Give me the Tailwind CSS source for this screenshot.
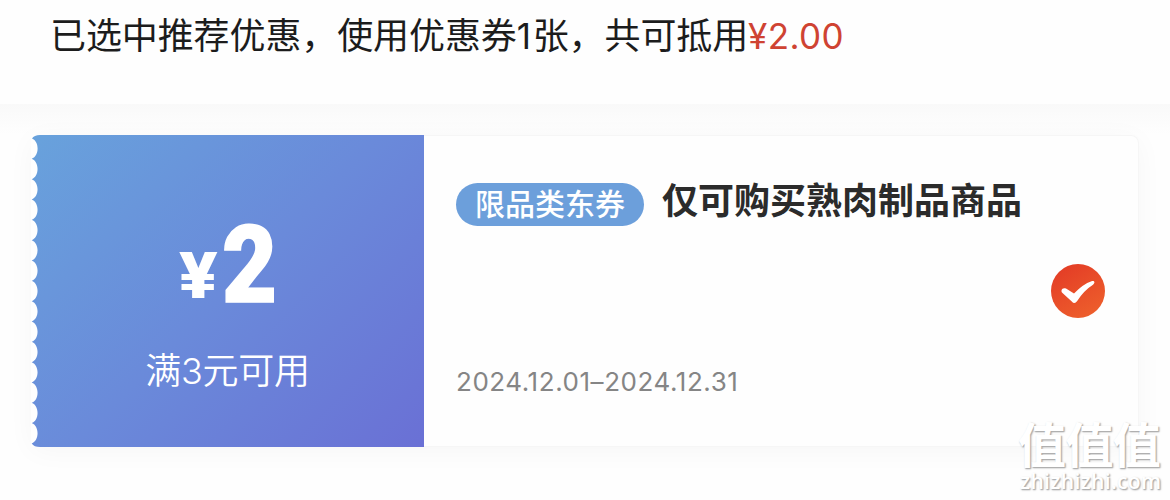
<!DOCTYPE html>
<html lang="zh-CN">
<head>
  <meta charset="UTF-8" />
  <meta name="viewport" content="width=device-width, initial-scale=1.0"/>
  <title>优惠券</title>
  <script src="https://cdn.jsdelivr.net/npm/@tailwindcss/browser@4"></script>
</head>
<body class="relative h-[500px] overflow-hidden bg-[#fefefe] font-[Inter,'Noto_Sans_CJK_SC',sans-serif]">

  <!-- Summary -->
  <header class="flex h-[104px] items-start bg-[#fefefe] pl-[50px] pt-[7px] text-[36px] leading-[52px] whitespace-nowrap text-[#1c1c1c]">
    <p class="tracking-[-0.1px] font-['Noto_Sans_CJK_SC',sans-serif]">已选中推荐优惠，使用优惠券<span class="inline-block w-[16px] font-[Inter] text-[35px] tracking-normal">1</span>张，共可抵用<span class="font-[Inter] text-[35px] tracking-[0.4px] text-[#cf4332]">¥2.00</span></p>
  </header>

  <main class="h-[396px] bg-linear-to-b from-[#f9f9f9] to-[#fefefe] to-[30px] pl-[31px] pt-[31px]">
    <!-- Coupon -->
    <section class="flex h-[312px] w-[1108px] rounded-lg bg-[#fefefe] shadow-[0_4px_28px_rgba(0,0,0,0.035)]">

      <div class="relative w-[393px] bg-[#fefefe]">
        <svg class="absolute inset-0" width="393" height="312" viewBox="0 0 393 312">
          <defs>
            <linearGradient id="blue" gradientUnits="userSpaceOnUse" x1="20" y1="-20" x2="373" y2="332">
              <stop offset="0" stop-color="#68a2dc"/>
              <stop offset="0.5" stop-color="#6a8ada"/>
              <stop offset="1" stop-color="#6a70d5"/>
            </linearGradient>
          </defs>
          <path id="ticket" fill="url(#blue)" d=""/>
        </svg>
        <div class="relative flex h-full flex-col items-center text-white">
          <div class="mt-[70px] flex h-[120px] items-baseline font-[Roboto] font-black leading-[120px]">
            <span class="relative -top-1 inline-block w-[43px] text-[65px]"><span class="inline-block origin-left scale-x-110">¥</span></span>
            <span class="inline-block w-[54px] text-[108px]"><span class="inline-block origin-left scale-x-[0.88] [-webkit-text-stroke:1.5px_white]">2</span></span>
          </div>
          <p class="mt-[17px] font-['Noto_Sans_CJK_SC',sans-serif] text-[36px] font-[350] leading-[52px] tracking-[-0.3px] whitespace-nowrap">满<span class="font-[Inter] font-light">3</span>元可用</p>
        </div>
      </div>

      <div class="flex flex-1 items-center justify-between rounded-r-lg border border-l-0 border-[#f6f6f6] pl-8 pr-[33px]">
        <div class="flex h-full flex-col">
          <div class="mt-[38px] flex h-[52px] items-center font-['Noto_Sans_CJK_SC',sans-serif] whitespace-nowrap">
            <span class="mt-[8px] flex h-[43px] w-[188px] items-center justify-center rounded-full bg-[#6c9fdb] pb-[4px] text-[30px] font-medium text-white">限品类东券</span>
            <h1 class="mb-1 ml-[18px] text-[36px] font-bold leading-[52px] text-[#2b2b2b]">仅可购买熟肉制品商品</h1>
          </div>
          <p class="mt-[136px] text-[26px] leading-[40px] tracking-[0.55px] text-[#858585]">2024.12.01–2024.12.31</p>
        </div>
        <svg width="54" height="54" viewBox="0 0 54 54">
          <defs>
            <linearGradient id="red" x1="0.2" y1="0" x2="0.8" y2="1">
              <stop offset="0" stop-color="#e33c26"/>
              <stop offset="1" stop-color="#ee602c"/>
            </linearGradient>
          </defs>
          <circle cx="27" cy="27" r="27" fill="url(#red)"/>
          <path d="M10.5 26.5C11 24.3 13 23.6 15 24.6L23 29.5Q32 20 40.5 17.2C43.5 16.4 44.6 18.5 42 20.8Q33 26.5 26.2 37Q23.5 40.6 20.8 37.4L11.5 29Q10.2 28 10.5 26.5Z" fill="#fff"/>
        </svg>
      </div>
    </section>
  </main>

  <!-- Watermark -->
  <div class="absolute left-[1018px] top-[415px] whitespace-nowrap text-white [text-shadow:1px_1px_2px_#aaa,1px_1px_1px_#bbb]">
    <div class="font-['Noto_Sans_CJK_SC',sans-serif] text-[48px] font-bold leading-[54px] tracking-[-0.6px]">值值值</div>
    <div class="pl-[2px] pt-[2px] font-['Open_Sans'] text-[21px] font-semibold leading-[20px] tracking-[0.35px]">zhizhizhi.com</div>
  </div>

  <script>
    // perforated left edge, 15 notches
    const step = 20.33;
    let d = 'M393 0H9Q3 0 1 3.5';
    for (let i = 1; i <= 15; i++) {
      const y = 3.5 + step * i;
      d += `C8.5 ${y - step + 3} 8.5 ${y - 3} 0.7 ${y}`;
    }
    d += 'Q3 312 9 312H393Z';
    document.getElementById('ticket').setAttribute('d', d);
  </script>
</body>
</html>
